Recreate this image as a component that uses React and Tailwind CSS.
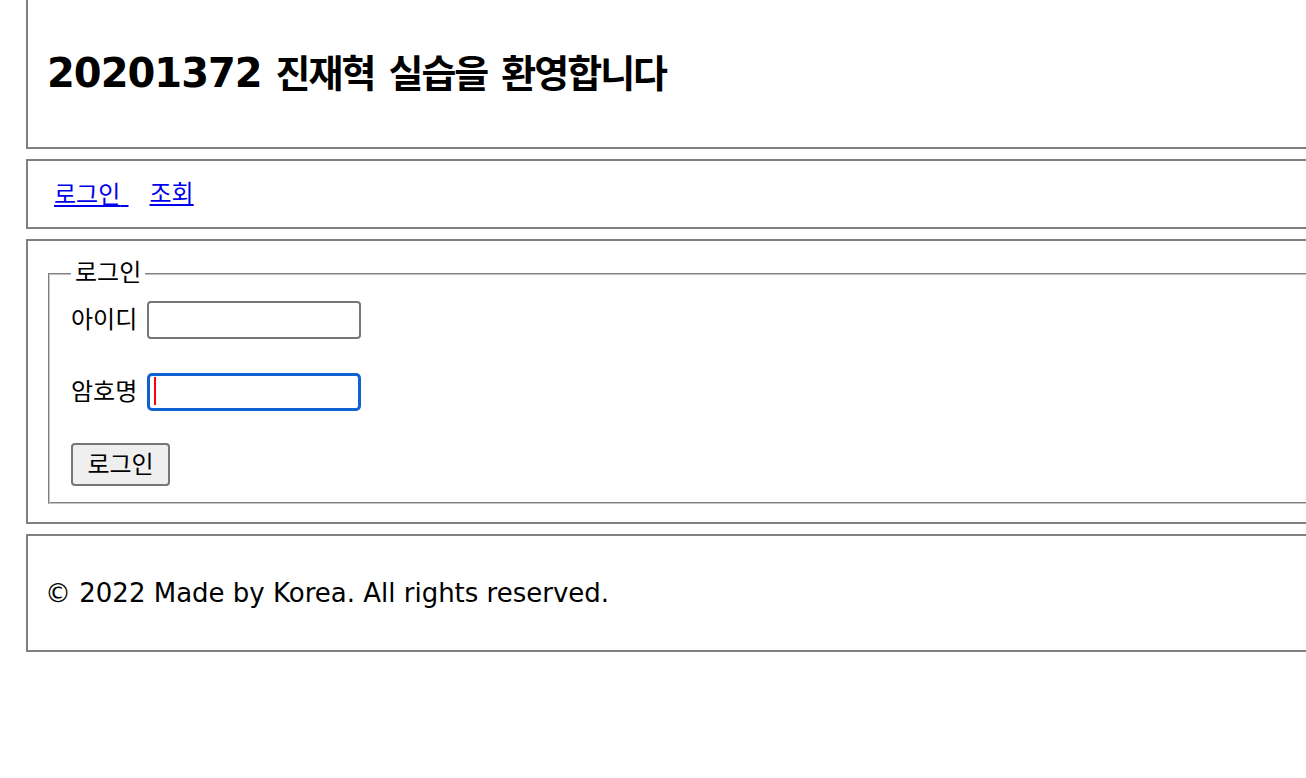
export default function App() {
  const font = { fontFamily: '"DejaVu Sans", "Noto Sans CJK KR", sans-serif' };
  const ko = 'text-[24px]';
  return (
    <div className="w-full overflow-hidden bg-white text-black text-[26px] h-[778px]" style={font}>
      <div className="pl-[26px] flex flex-col gap-[10px]">
        <header className="w-[1320px] h-[149px] border-2 border-t-0 border-[#808080] flex items-center pl-[19px]">
          <h1 className="text-[40px] font-bold leading-[48px]">
            <span className="tracking-[-1px]">20201372</span>{' '}
            <span className="text-[38px] tracking-[-2px]">진재혁</span>{' '}
            <span className="text-[38px] tracking-[-2px]">실습을</span>{' '}
            <span className="text-[38px] tracking-[-2px]">환영합니다</span>
          </h1>
        </header>

        <nav className="w-[1320px] h-[70px] border-2 border-[#808080] flex items-center pl-[26px]">
          <a href="#" className="text-[#0000ee] underline leading-[28px]">
            <span className={ko}>로그인</span>&nbsp;
          </a>
          <a href="#" className={`text-[#0000ee] underline leading-[28px] ml-[21px] ${ko}`}>조회</a>
        </nav>

        <main className="w-[1320px] h-[285px] border-2 border-[#808080] pl-[20px] pt-[18px]">
          <fieldset className="border-[1px] border-t-[#808080] border-l-[#808080] border-b-[#c4c4c4] border-r-[#c4c4c4] shadow-[inset_1px_1px_0_#c4c4c4,inset_-1px_-1px_0_#808080] h-[245px] pl-[22px] pt-[14px]">
            <legend className={`px-[4px] leading-[28px] bg-white ${ko}`}>로그인</legend>
            <div className="flex items-center gap-[10px]">
              <label className={`leading-[28px] ${ko}`}>아이디</label>
              <input type="text" className="w-[214px] h-[38px] border-2 border-[#767676] rounded-[4px] bg-white" />
            </div>
            <div className="flex items-center gap-[10px] mt-[33px]">
              <label className={`leading-[28px] ${ko}`}>암호명</label>
              <div className="relative">
                <input type="password" className="w-[214px] h-[38px] border-[3px] border-[#0f62cf] rounded-[5px] bg-white" />
                <span className="absolute left-[7px] top-[5px] w-[2px] h-[28px] bg-[#ff0000]" />
              </div>
            </div>
            <button className={`mt-[32px] w-[99px] h-[43px] bg-[#efefef] border-2 border-[#767676] rounded-[4px] leading-[28px] ${ko}`}>로그인</button>
          </fieldset>
        </main>

        <footer className="w-[1320px] h-[118px] border-2 border-[#808080] flex items-center pl-[17px]">
          <p className="leading-[30px]">© 2022 Made by Korea. All rights reserved.</p>
        </footer>
      </div>
    </div>
  );
}
